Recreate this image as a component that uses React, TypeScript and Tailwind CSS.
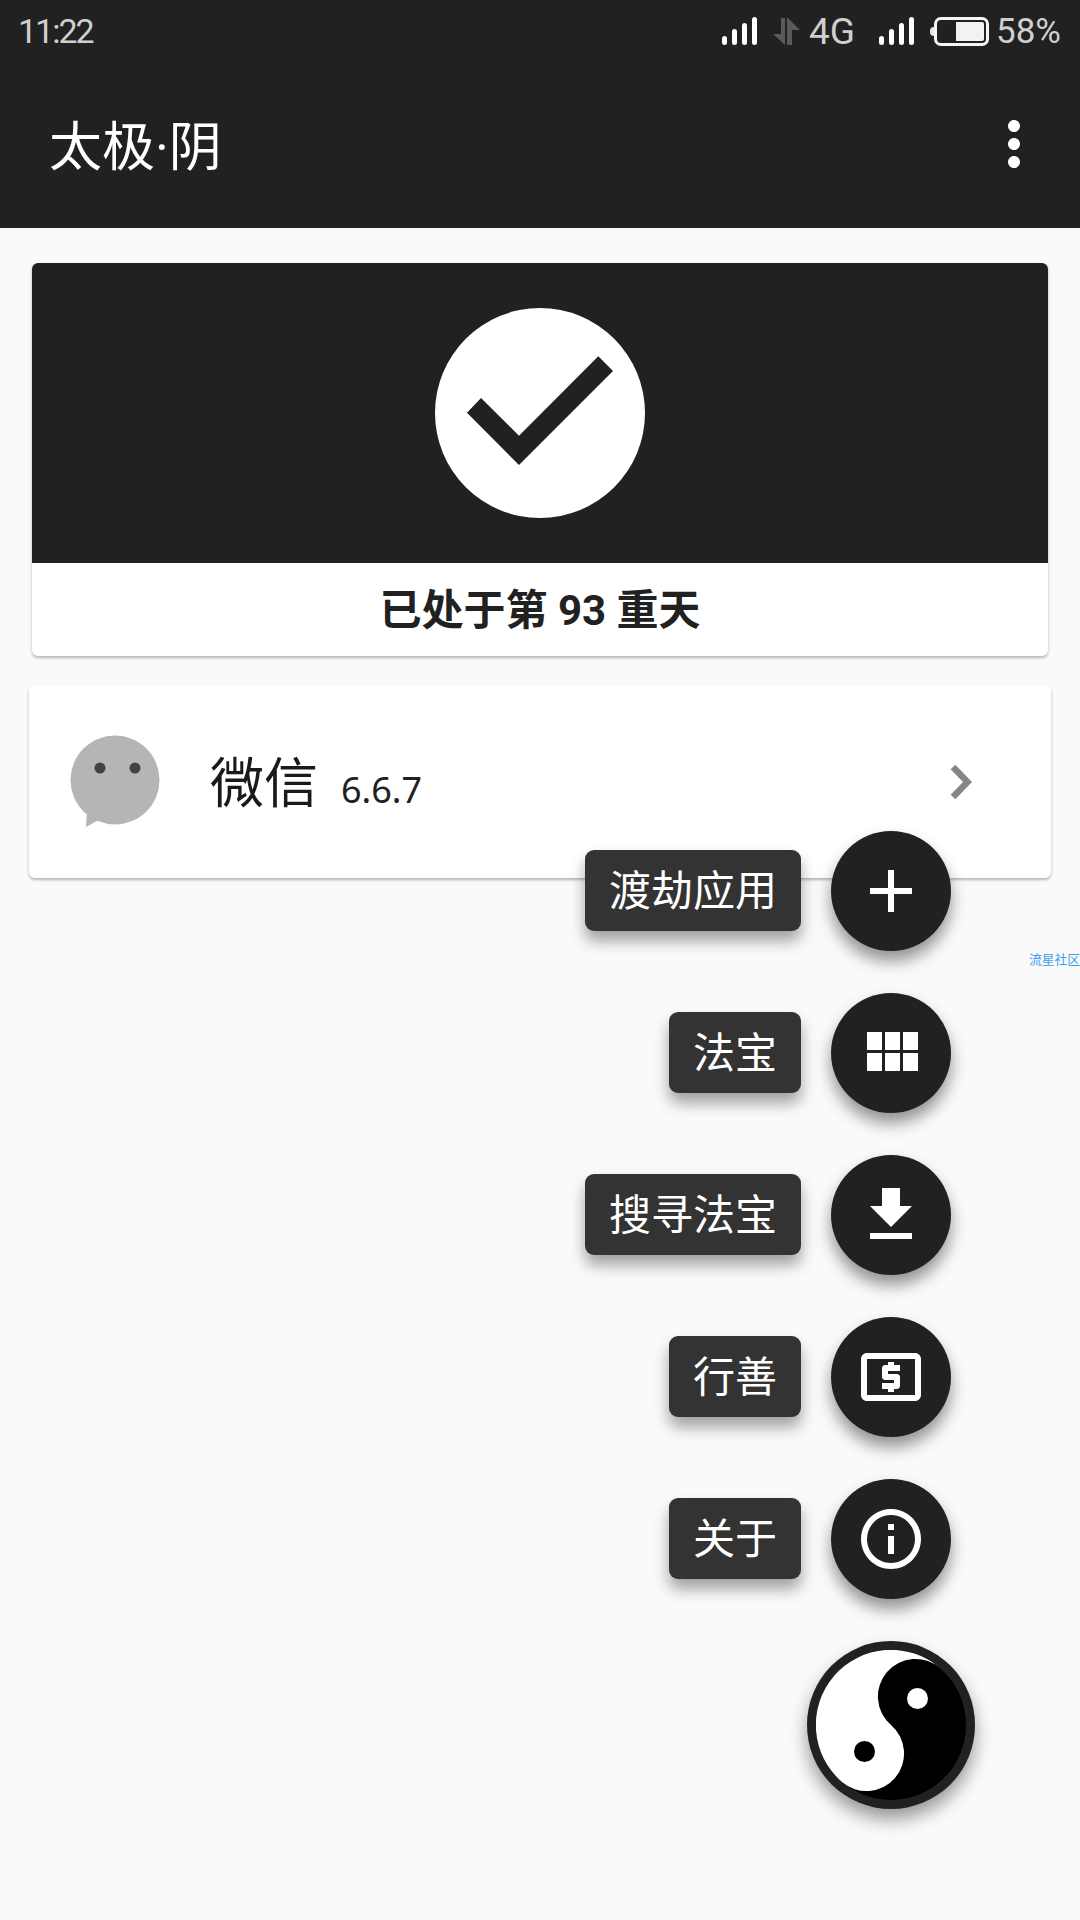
import React from "react";

const CJK = "font-['Roboto','Noto_Sans_CJK_SC',sans-serif]";

function Signal() {
  return (
    <svg width="35" height="28" viewBox="0 0 35 28" fill="#fff">
      <rect x="0" y="19" width="5" height="9" rx="2.5" />
      <rect x="10" y="12" width="5" height="16" rx="2.5" />
      <rect x="20" y="6" width="5" height="22" rx="2.5" />
      <rect x="30" y="0" width="5" height="28" rx="2.5" />
    </svg>
  );
}

function Arrows() {
  return (
    <svg width="28" height="28" viewBox="0 0 28 28" fill="#5a5a5a">
      <path d="M9 1h4v27L1 17h8z" />
      <path d="M15 0l13 13h-8v15h-5z" />
    </svg>
  );
}

function Battery() {
  return (
    <div className="flex items-center">
      <div className="w-[4px] h-[9px] rounded-l-full bg-[#e6e6e6]" />
      <div className="w-[55px] h-[29px] rounded-[7px] border-[3px] border-[#f5f5f5] p-[2px] flex justify-end">
        <div className="w-[28px] h-full bg-[#f2f2f2] rounded-r-[2px]" />
      </div>
    </div>
  );
}

function MaterialIcon({ d }: { d: string }) {
  return (
    <svg width="72" height="72" viewBox="0 0 24 24" fill="#fff">
      <path d={d} />
    </svg>
  );
}

function Fab({ label, d }: { label: string; d: string }) {
  return (
    <div className="flex items-start justify-end">
      <div className="mt-[19px] h-[81px] px-[24px] pt-[3px] flex items-center bg-[#333333] rounded-[9px] text-white text-[42px] leading-none shadow-[0_10px_15px_rgba(0,0,0,0.36)]">
        {label}
      </div>
      <div className="ml-[30px] w-[120px] h-[120px] rounded-full bg-[#212121] flex items-center justify-center shadow-[0_10px_16px_rgba(0,0,0,0.42)]">
        <MaterialIcon d={d} />
      </div>
    </div>
  );
}

export default function App() {
  return (
    <div className={`relative w-[1080px] h-[1920px] overflow-hidden bg-[#fafafa] ${CJK}`}>
      <header className="h-[228px] bg-[#212121] flex flex-col">
        <div className="h-[62px] flex items-center justify-between pl-[18px] pr-[19px] text-[34px] leading-none text-[#cfcfcf]">
          <span className="tracking-[-2px]">11:22</span>
          <div className="flex items-center">
            <Signal />
            <div className="ml-[15px]"><Arrows /></div>
            <span className="ml-[9px] text-[37px]">4G</span>
            <div className="ml-[24px]"><Signal /></div>
            <div className="ml-[16px]"><Battery /></div>
            <span className="ml-[7px] text-[35px]">58%</span>
          </div>
        </div>
        <div className="flex-1 flex items-center justify-between pl-[49px] pr-[30px]">
          <span className="mt-[6px] text-[53px] leading-none text-white">太极·阴</span>
          <svg width="72" height="72" viewBox="0 0 24 24" fill="#fff" className="mb-[2px]">
            <path d="M12 8c1.1 0 2-.9 2-2s-.9-2-2-2-2 .9-2 2 .9 2 2 2zm0 2c-1.1 0-2 .9-2 2s.9 2 2 2 2-.9 2-2-.9-2-2-2zm0 6c-1.1 0-2 .9-2 2s.9 2 2 2 2-.9 2-2-.9-2-2-2z" />
          </svg>
        </div>
      </header>

      <main className="flex flex-col">
        <section className="mt-[35px] mx-[32px] rounded-[6px] bg-white overflow-hidden shadow-[0_2px_3px_rgba(0,0,0,0.28)]">
          <div className="h-[300px] bg-[#212121] flex items-center justify-center">
            <svg width="210" height="210" viewBox="0 0 210 210">
              <circle cx="105" cy="105" r="105" fill="#fff" />
              <path d="M32 104.7L46 90L84 127.7L163.3 48.3L178 63L84 157Z" fill="#212121" />
            </svg>
          </div>
          <div className="h-[93px] pt-[3px] flex items-center justify-center text-[42px] font-bold text-[#212121] leading-none">
            已处于第 93 重天
          </div>
        </section>

        <section className="mt-[29px] mx-[29px] h-[193px] rounded-[6px] bg-white shadow-[0_2px_3px_rgba(0,0,0,0.28)] flex items-center pl-[41px] pr-[79px]">
          <svg width="90" height="94" viewBox="0 0 90 94">
            <circle cx="45" cy="45" r="44.5" fill="#b5b5b5" />
            <path d="M17 76L16 92L32 83Z" fill="#b5b5b5" />
            <circle cx="30" cy="33" r="5.5" fill="#424242" />
            <circle cx="65" cy="33" r="5.5" fill="#424242" />
          </svg>
          <span className="ml-[50px] mt-[7px] text-[54px] leading-none text-[#1a1a1a]">微信</span>
          <span className="ml-[23px] mt-[16px] text-[36px] leading-none text-[#212121] font-['Noto_Sans',sans-serif]">6.6.7</span>
          <svg width="22" height="36" viewBox="0 0 22 36" className="ml-auto" fill="none" stroke="#868686" strokeWidth="6.5">
            <path d="M3 3L17.5 18L3 33" />
          </svg>
        </section>
      </main>

      <span className="absolute left-[1029px] top-[954px] text-[12.75px] leading-none text-[#39a0f0] whitespace-nowrap">流星社区</span>

      <div className="absolute right-[129px] top-[831px] flex flex-col gap-[42px]">
        <Fab label="渡劫应用" d="M19 13h-6v6h-2v-6H5v-2h6V5h2v6h6v2z" />
        <Fab label="法宝" d="M4 11h5V5H4v6zm0 7h5v-6H4v6zm6 0h5v-6h-5v6zm6 0h5v-6h-5v6zm-6-7h5V5h-5v6zm6-6v6h5V5h-5z" />
        <Fab label="搜寻法宝" d="M19 9h-4V3H9v6H5l7 7 7-7zM5 18v2h14v-2H5z" />
        <Fab label="行善" d="M11 17h2v-1h1c.55 0 1-.45 1-1v-3c0-.55-.45-1-1-1h-3v-1h4V8h-2V7h-2v1h-1c-.55 0-1 .45-1 1v3c0 .55.45 1 1 1h3v1H9v2h2v1zm9-13H4c-1.11 0-1.99.89-1.99 2L2 18c0 1.11.89 2 2 2h16c1.11 0 2-.89 2-2V6c0-1.11-.89-2-2-2zm0 14H4V6h16v12z" />
        <Fab label="关于" d="M11 7h2v2h-2zm0 4h2v6h-2zm1-9C6.48 2 2 6.48 2 12s4.48 10 10 10 10-4.48 10-10S17.52 2 12 2zm0 18c-4.41 0-8-3.59-8-8s3.59-8 8-8 8 3.59 8 8-3.59 8-8 8z" />
      </div>

      <div className="absolute left-[807px] top-[1641px] w-[168px] h-[168px] rounded-full bg-[#212121] flex items-center justify-center shadow-[0_10px_18px_rgba(0,0,0,0.4)]">
        <svg width="150" height="150" viewBox="0 0 150 150">
          <circle cx="75" cy="75" r="75" fill="#000" />
          <path d="M124 18A75 75 0 0 0 26 132A37.5 37.5 0 0 0 75 75A37.5 37.5 0 0 1 124 18Z" fill="#fff" />
          <circle cx="101.5" cy="48.5" r="10.5" fill="#fff" />
          <circle cx="48.5" cy="101.5" r="10.5" fill="#000" />
        </svg>
      </div>
    </div>
  );
}
